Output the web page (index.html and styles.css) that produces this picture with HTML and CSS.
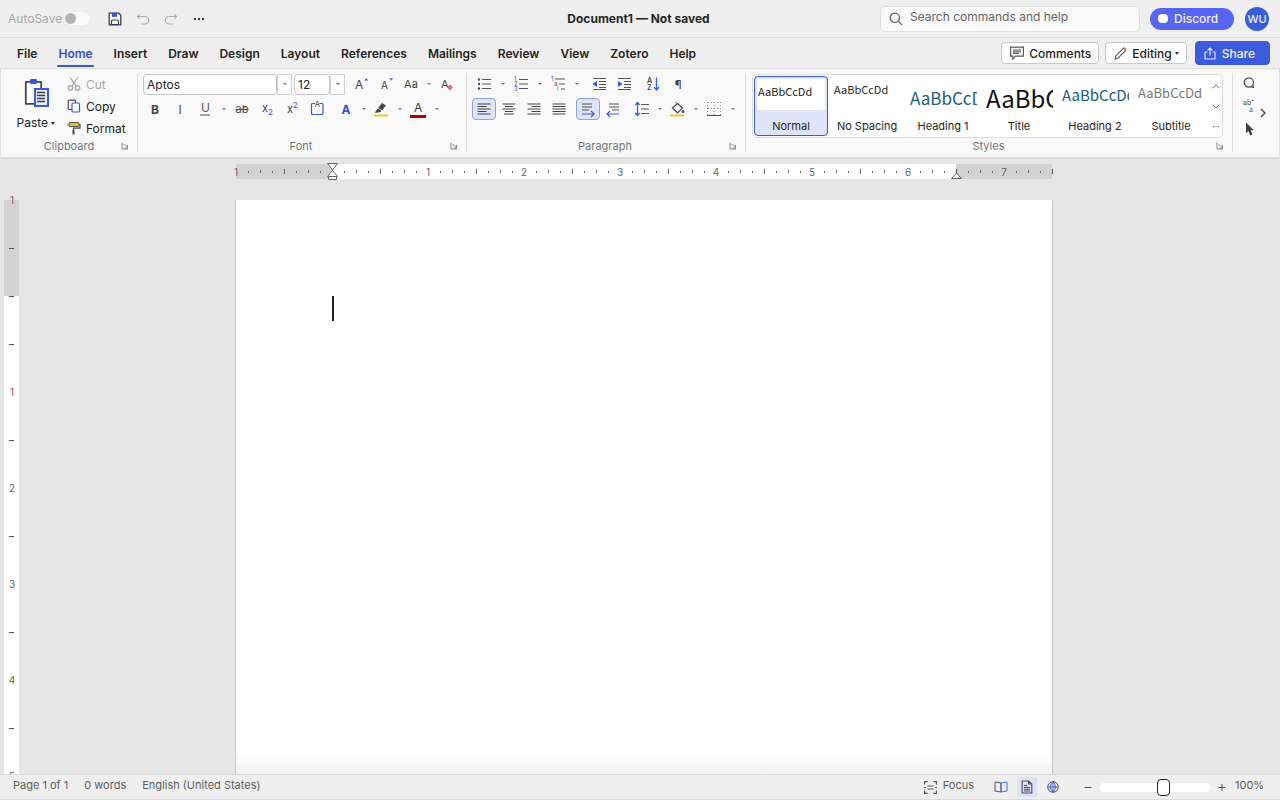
FILE: index.html
```html
<!DOCTYPE html>
<html lang="en">
<head>
<meta charset="utf-8">
<meta name="viewport" content="width=device-width, initial-scale=1">
<title>Document1 — Not saved</title>
<link rel="stylesheet" href="styles.css">
</head>
<body>
<div class="app">
<header class="titlebar">
  <div class="quick">
    <label class="autosave" for="autosave">AutoSave</label>
    <input class="toggle" type="checkbox" id="autosave" disabled>
    <button class="qbtn save" aria-label="Save"><svg width="14" height="14" viewBox="0 0 14 14"><path d="M1.2 1.2h9.6l2 2v9.600H1.200z" fill="#fff" stroke="#3c3c44" stroke-width="1.300"/><path d="M4 0.800h5v4H4z" fill="#3450d0"/><path d="M3.500 12.500v-3.200q0-1.300 1.300-1.300h4.400q1.300 0 1.300 1.300v3.200z" fill="#fff" stroke="#3c3c44" stroke-width="1.200"/></svg></button>
    <button class="qbtn" aria-label="Undo" disabled><svg width="14" height="12" viewBox="0 0 14 12" fill="none" stroke="#adadad" stroke-width="1.200"><path d="M1.500 3.500h7.500a3.500 3.500 0 0 1 0 7.500H5"/><path d="M3.800 1.200L1.500 3.500l2.300 2.300" /></svg></button>
    <button class="qbtn" aria-label="Redo" disabled><svg width="14" height="12" viewBox="0 0 14 12" fill="none" stroke="#adadad" stroke-width="1.200"><path d="M12.500 3.500H5A3.500 3.500 0 0 0 5 11h4"/><path d="M10.200 1.200l2.300 2.300-2.300 2.300"/></svg></button>
    <button class="qbtn" aria-label="More"><svg width="12" height="4" viewBox="0 0 12 4" fill="#3a3a3a"><circle cx="2" cy="2" r="1.200"/><circle cx="6" cy="2" r="1.200"/><circle cx="10" cy="2" r="1.200"/></svg></button>
  </div>
  <h1 class="doc-title">Document1 — Not saved</h1>
  <div class="title-right">
    <label class="search"><svg width="14" height="14" viewBox="0 0 14 14" fill="none" stroke="#5c5c5c" stroke-width="1.200"><circle cx="5.800" cy="5.800" r="4.700"/><path d="M9.200 9.200l4 4"/></svg><input type="text" placeholder="Search commands and help" aria-label="Search commands and help"></label>
    <button class="discord"><span class="discord-mark"></span>Discord</button>
    <button class="avatar">WU</button>
  </div>
</header>

<nav class="tabbar">
  <div class="tabs">
    <button class="tab">File</button><button class="tab active">Home</button><button class="tab">Insert</button><button class="tab">Draw</button><button class="tab">Design</button><button class="tab">Layout</button><button class="tab">References</button><button class="tab">Mailings</button><button class="tab">Review</button><button class="tab">View</button><button class="tab">Zotero</button><button class="tab">Help</button>
  </div>
  <div class="tab-actions">
    <button class="action"><svg width="14" height="14" viewBox="0 0 14 14" fill="none" stroke="#555" stroke-width="1.100"><path d="M0.600 1.100h12.800v9H5.500L2.800 12.800v-2.700H0.600z"/><path d="M3 4h8M3 5.700h8M3 7.400h6"/></svg>Comments</button>
    <button class="action editing"><svg width="13" height="13" viewBox="0 0 13 13" fill="none" stroke="#555" stroke-width="1.100"><path d="M1 12l0.900-3.300L9.700 1l2.200 2.200-7.700 7.800z"/><path d="M10.200 0.800l2 2" stroke="#d88a4a" stroke-width="1.600"/></svg>Editing<span class="down"></span></button>
    <button class="action share"><svg width="12" height="13" viewBox="0 0 12 13" fill="none" stroke="#e6ebff" stroke-width="1.100"><path d="M3.500 5H1v7h10V5H8.500M6 8.500V1M3.600 3.400L6 1l2.400 2.400"/></svg>Share</button>
  </div>
</nav>

<section class="ribbon">
  <div class="group clipboard">
    <div class="group-body">
      <button class="paste"><svg width="26" height="32" viewBox="0 0 26 32"><path d="M2.800 4.800h15.400v22H2.800z" fill="#fff" stroke="#45454d" stroke-width="1.800" stroke-linejoin="round"/><rect x="7" y="2" width="7" height="5" rx="1" fill="#3a55d8"/><rect x="12" y="12" width="13" height="17" fill="#e8edff" stroke="#3a5bdc" stroke-width="2"/><path d="M14 15.500h8M14 18.500h8M14 21.500h8M14 24.500h8" stroke="#3c3c44" stroke-width="1.700"/></svg><span class="paste-label">Paste <span class="down"></span></span></button>
      <div class="clip-list">
        <button class="clip" disabled><svg width="14" height="14" viewBox="0 0 14 14" fill="none" stroke="#a6a6a6" stroke-width="1.200"><circle cx="3.500" cy="11" r="2.300"/><circle cx="10.500" cy="11" r="2.300"/><path d="M3 0.500l6.300 8.600M11 0.500L4.700 9.100"/></svg>Cut</button>
        <button class="clip"><svg width="14" height="14" viewBox="0 0 14 14" fill="none" stroke-width="1.200"><path d="M5 10.500H2.200Q1.200 10.500 1.200 9.500V2.200Q1.200 1.200 2.200 1.200H7.500Q8.500 1.200 8.500 2.200V4" stroke="#4a4a50"/><rect x="5" y="4" width="7.500" height="9" rx="1" stroke="#3a5bdc"/></svg>Copy</button>
        <button class="clip"><svg width="14" height="14" viewBox="0 0 14 14"><rect x="2" y="1.600" width="10" height="4" rx="1" fill="#ecc02c" stroke="#4a4a44"/><path d="M1 3.600H0.500M12 3.500h1v3.700H6.500v2" fill="none" stroke="#4a4a44" stroke-width="1.200"/><path d="M6.500 9v4.500" stroke="#4a4a44" stroke-width="2"/></svg>Format</button>
      </div>
    </div>
    <div class="group-foot"><span>Clipboard</span><button class="launch" aria-label="Clipboard options"><svg width="8" height="8" viewBox="0 0 8 8" fill="none" stroke="#858585"><path d="M1 0.500V7h6M2.500 2l4 4M6.500 3v3.200H3.500"/></svg></button></div>
  </div>

  <div class="group font">
    <div class="group-body rows">
      <div class="row">
        <input class="field name" type="text" value="Aptos" aria-label="Font"><button class="field-arrow" aria-label="Font list"><i class="caret-mark"></i></button>
        <input class="field size" type="text" value="12" aria-label="Font size"><button class="field-arrow" aria-label="Size list"><i class="caret-mark"></i></button>
        <button class="tool gap" aria-label="Grow font"><svg width="16" height="16" viewBox="0 0 16 16"><text x="2" y="13" font-size="12" fill="#444">A</text><path d="M11.500 4.500h3.600L13.300 2z" fill="#4355d8"/></svg></button>
        <button class="tool" aria-label="Shrink font"><svg width="16" height="16" viewBox="0 0 16 16"><text x="3" y="13" font-size="10" fill="#444">A</text><path d="M11.500 2.200h3.600l-1.800 2.500z" fill="#4355d8"/></svg></button>
        <button class="tool case" aria-label="Change case">Aa</button><button class="caret slim" aria-label="Case options"><i class="caret-mark"></i></button>
        <button class="tool" aria-label="Clear formatting"><svg width="16" height="16" viewBox="0 0 16 16"><text x="3" y="12" font-size="11" fill="#444">A</text><path d="M12 8.500l3 3-3 3-3-3z" fill="#e0688e"/></svg></button>
      </div>
      <div class="row second">
        <button class="tool bold">B</button><button class="tool">I</button><button class="tool" aria-label="Underline"><svg width="16" height="16" viewBox="0 0 16 16"><text x="4" y="11" font-size="12" fill="#555">U</text><path d="M3 14h10" stroke="#666" stroke-width="1.200"/></svg></button><button class="caret" aria-label="Underline options"><i class="caret-mark"></i></button><button class="tool strike">ab</button>
        <button class="tool" aria-label="Subscript"><svg width="16" height="16" viewBox="0 0 16 16"><text x="3" y="11" font-size="11" fill="#444">x</text><text x="9" y="14" font-size="8" fill="#4355d8">2</text></svg></button>
        <button class="tool" aria-label="Superscript"><svg width="16" height="16" viewBox="0 0 16 16"><text x="3" y="12" font-size="11" fill="#444">x</text><text x="9" y="7" font-size="8" fill="#4355d8">2</text></svg></button>
        <button class="tool" aria-label="Character border"><svg width="16" height="16" viewBox="0 0 16 16"><rect x="2.500" y="2.500" width="11.500" height="11" rx="1" fill="none" stroke="#3d55c8" stroke-width="1.200"/><path d="M6 2.500h4.500" stroke="#f9f9f9" stroke-width="2"/><text x="5.500" y="6" font-size="8" fill="#444">A</text></svg></button>
        <button class="tool effects gap">A</button><button class="caret slim" aria-label="Effect options"><i class="caret-mark"></i></button>
        <button class="tool" aria-label="Highlight"><svg width="16" height="16" viewBox="0 0 16 16"><path d="M3.500 9L9 2l4 2.500-5.500 6.500-5.500 1z" fill="#454545"/><path d="M5 7l4 3" stroke="#f9f9f9" stroke-width="0.800"/><path d="M1 13.500h14v2H1z" fill="#e9c930"/></svg></button><button class="caret" aria-label="Highlight colors"><i class="caret-mark"></i></button>
        <button class="tool" aria-label="Font color"><svg width="16" height="18" viewBox="0 0 16 18"><text x="4" y="12" font-size="12" fill="#444">A</text><path d="M0 15h16v3H0z" fill="#b90000"/></svg></button><button class="caret" aria-label="Font colors"><i class="caret-mark"></i></button>
      </div>
    </div>
    <div class="group-foot"><span>Font</span><button class="launch" aria-label="Font options"><svg width="8" height="8" viewBox="0 0 8 8" fill="none" stroke="#858585"><path d="M1 0.500V7h6M2.500 2l4 4M6.500 3v3.200H3.500"/></svg></button></div>
  </div>

  <div class="group paragraph">
    <div class="group-body rows">
      <div class="row">
        <button class="tool" aria-label="Bullets"><svg width="16" height="16" viewBox="0 0 16 16" stroke="#555" stroke-width="1.200"><path d="M6 3.500h9M6 8h9M6 12.500h9"/><g fill="#3d46c8" stroke="none"><circle cx="3" cy="3.500" r="1.200"/><circle cx="3" cy="8" r="1.200" fill="#444"/><circle cx="3" cy="12.500" r="1.200" fill="#444"/></g></svg></button><button class="caret" aria-label="Bullet options"><i class="caret-mark"></i></button>
        <button class="tool" aria-label="Numbering"><svg width="16" height="16" viewBox="0 0 16 16"><path d="M6 3.500h9M6 8h9M6 12.500h9" stroke="#555" stroke-width="1.200"/><g font-size="6" fill="#4050c0"><text x="1" y="5">1</text><text x="1" y="10">2</text><text x="1" y="15">3</text></g></svg></button><button class="caret" aria-label="Number options"><i class="caret-mark"></i></button>
        <button class="tool" aria-label="Multilevel list"><svg width="16" height="16" viewBox="0 0 16 16"><path d="M5 3h10M9 8h6M11 13h4" stroke="#555" stroke-width="1.200"/><g font-size="6"><text x="1" y="5" fill="#4050c0">1</text><text x="4" y="10" fill="#555">a</text><text x="7" y="15" fill="#555">i</text></g></svg></button><button class="caret" aria-label="Multilevel options"><i class="caret-mark"></i></button>
        <button class="tool gap" aria-label="Decrease indent"><svg width="16" height="16" viewBox="0 0 16 16"><path d="M2 2.500h13M8 5.500h7M8 8.500h7M8 11.500h7M2 13.500h13" stroke="#555" stroke-width="1.200"/><path d="M6 5v6L1.500 8z" fill="#3a55d8"/></svg></button>
        <button class="tool" aria-label="Increase indent"><svg width="16" height="16" viewBox="0 0 16 16"><path d="M2 2.500h13M8 5.500h7M8 8.500h7M8 11.500h7M2 13.500h13" stroke="#555" stroke-width="1.200"/><path d="M2 5v6L6.500 8z" fill="#3a55d8"/></svg></button>
        <button class="tool gap" aria-label="Sort"><svg width="16" height="16" viewBox="0 0 16 16"><g font-size="7" font-weight="600" fill="#444"><text x="2" y="7">A</text><text x="2" y="14">Z</text></g><path d="M11.500 1.500v12M9 11l2.500 3 2.500-3" fill="none" stroke="#3a5bdc" stroke-width="1.200"/></svg></button>
        <button class="tool pilcrow">¶</button>
      </div>
      <div class="row second">
        <button class="tool on" aria-label="Align left"><svg width="16" height="16" viewBox="0 0 16 16" stroke="#444" stroke-width="1.200"><path d="M1.500 3h13M1.500 5.500h9M1.500 8h13M1.500 10.500h9M1.500 13h13"/></svg></button>
        <button class="tool" aria-label="Center"><svg width="16" height="16" viewBox="0 0 16 16" stroke="#444" stroke-width="1.200"><path d="M1.500 3h13M4 5.500h8M1.500 8h13M4 10.500h8M3 13h10"/></svg></button>
        <button class="tool" aria-label="Align right"><svg width="16" height="16" viewBox="0 0 16 16" stroke="#444" stroke-width="1.200"><path d="M1.500 3h13M5.500 5.500h9M1.500 8h13M5.500 10.500h9M1.500 13h13"/></svg></button>
        <button class="tool" aria-label="Justify"><svg width="16" height="16" viewBox="0 0 16 16" stroke="#444" stroke-width="1.200"><path d="M1.500 3h13M1.500 5.500h13M1.500 8h13M1.500 10.500h13M1.500 13h13"/></svg></button>
        <button class="tool on gap" aria-label="Left to right"><svg width="16" height="16" viewBox="0 0 16 16" fill="none" stroke="#555" stroke-width="1.200"><path d="M2 3h10M2 6h10M2 9h7"/><path d="M2 13h12M11 10l3 3-3 3" stroke="#3a5bdc"/></svg></button>
        <button class="tool" aria-label="Right to left"><svg width="16" height="16" viewBox="0 0 16 16" fill="none" stroke="#555" stroke-width="1.200"><path d="M4 3h10M4 6h10M7 9h7"/><path d="M14 13H2M5 10l-3 3 3 3" stroke="#3a5bdc"/></svg></button>
        <button class="tool gap" aria-label="Line spacing"><svg width="16" height="16" viewBox="0 0 16 16" fill="none" stroke="#555" stroke-width="1.200"><path d="M7 3.500h8M7 8h8M7 12.500h8"/><path d="M3.500 1.500v13M1.300 4l2.200-2.500L5.700 4M1.300 12l2.200 2.500L5.700 12" stroke="#3a5bdc"/></svg></button><button class="caret slim" aria-label="Spacing options"><i class="caret-mark"></i></button>
        <button class="tool" aria-label="Shading"><svg width="16" height="16" viewBox="0 0 16 16"><path d="M3.500 7l5-4.500 5 4.500-5 5z" fill="none" stroke="#484848" stroke-width="1.200"/><path d="M6.500 1l2.500 2.500" stroke="#484848"/><circle cx="14" cy="10.500" r="1.500" fill="#4a46c8"/><path d="M1 13.500h14v2H1z" fill="#e9c930"/></svg></button><button class="caret" aria-label="Shading colors"><i class="caret-mark"></i></button>
        <button class="tool" aria-label="Borders"><svg width="16" height="16" viewBox="0 0 16 16" fill="none" stroke="#888" stroke-dasharray="1 2"><path d="M2 1.500h13M2 7.500h13M1.500 1v13M8 1v13M14.500 1v13"/><path d="M1 14.500h14" stroke="#3d46b8" stroke-dasharray="none"/></svg></button><button class="caret" aria-label="Border options"><i class="caret-mark"></i></button>
      </div>
    </div>
    <div class="group-foot"><span>Paragraph</span><button class="launch" aria-label="Paragraph options"><svg width="8" height="8" viewBox="0 0 8 8" fill="none" stroke="#858585"><path d="M1 0.500V7h6M2.500 2l4 4M6.500 3v3.200H3.500"/></svg></button></div>
  </div>

  <div class="group styles">
    <div class="gallery">
      <button class="style selected"><span class="preview">AaBbCcDd</span><span class="style-name">Normal</span></button>
      <button class="style"><span class="preview tight">AaBbCcDd</span><span class="style-name">No Spacing</span></button>
      <button class="style"><span class="preview h1">AaBbCcDd</span><span class="style-name">Heading 1</span></button>
      <button class="style"><span class="preview title">AaBbCcDd</span><span class="style-name">Title</span></button>
      <button class="style"><span class="preview h2">AaBbCcDd</span><span class="style-name">Heading 2</span></button>
      <button class="style"><span class="preview subtitle">AaBbCcDd</span><span class="style-name">Subtitle</span></button>
      <div class="gallery-nav">
        <button aria-label="Scroll up"><svg width="8" height="5" viewBox="0 0 8 5" fill="none" stroke="#777"><path d="M0.700 4.300L4 1l3.300 3.300"/></svg></button>
        <button aria-label="Scroll down"><svg width="8" height="5" viewBox="0 0 8 5" fill="none" stroke="#777"><path d="M0.700 0.700L4 4l3.300-3.300"/></svg></button>
        <button aria-label="All styles"><svg width="8" height="3" viewBox="0 0 8 3" fill="#666"><circle cx="1.500" cy="1.500" r="0.700"/><circle cx="4" cy="1.500" r="0.700"/><circle cx="6.500" cy="1.500" r="0.700"/></svg></button>
      </div>
    </div>
    <div class="group-foot"><span>Styles</span><button class="launch" aria-label="Style options"><svg width="8" height="8" viewBox="0 0 8 8" fill="none" stroke="#858585"><path d="M1 0.500V7h6M2.500 2l4 4M6.500 3v3.200H3.500"/></svg></button></div>
  </div>

  <div class="overflow">
    <div class="edit-tools">
      <button aria-label="Find"><svg width="12" height="12" viewBox="0 0 12 12"><circle cx="5.800" cy="5.500" r="4.600" fill="none" stroke="#4a4a50" stroke-width="1.200"/><path d="M8 11l3-3v3z" fill="#3a46c8"/></svg></button>
      <button aria-label="Replace"><svg width="12" height="14" viewBox="0 0 12 14"><text x="0" y="6" font-size="7" fill="#555">ab</text><path d="M9 1.500h1.500" stroke="#555"/><text x="6" y="13" font-size="7" fill="#4a5be0">a</text></svg></button>
      <button aria-label="Select"><svg width="12" height="14" viewBox="0 0 12 14"><path d="M3 0.500v10.800l2.400-2.200 1.900 4.400 2.200-0.900-1.900-4.300h3.200z" fill="#3e3e44"/></svg></button>
    </div>
    <button class="next" aria-label="Scroll ribbon"><svg width="6" height="10" viewBox="0 0 6 10" fill="none" stroke="#4a4a4a" stroke-width="1.300"><path d="M1 1l4 4-4 4"/></svg></button>
  </div>
</section>

<main class="workspace">
  <div class="ruler-left" aria-hidden="true">
    <svg class="vscale" width="15" height="574">
      <defs><pattern id="vticks" width="15" height="96" patternUnits="userSpaceOnUse"><path d="M5 48.500h5" stroke="#555"/></pattern></defs>
      <rect width="15" height="574" fill="#fff"/><rect width="15" height="96" fill="#d2d2d2"/>
      <rect width="15" height="574" fill="url(#vticks)"/>
      <path d="M5 96.500h5" stroke="#555"/>
      <g class="marks"><text x="8" y="4">1</text><text x="8" y="196">1</text><text x="8" y="292">2</text><text x="8" y="388">3</text><text x="8" y="484">4</text><text x="8" y="580">5</text></g>
    </svg>
  </div>
  <div class="canvas">
    <svg class="hscale" width="816" height="16" viewBox="0 0 816 16" aria-hidden="true">
      <defs><pattern id="hticks" width="96" height="16" patternUnits="userSpaceOnUse"><path d="M12.500 7v2M24.500 6v3M36.500 7v2M60.500 7v2M72.500 6v3M84.500 7v2M48.500 5v5" stroke="#666"/></pattern></defs>
      <rect width="816" height="15" fill="#fff"/><rect width="96" height="15" fill="#d2d2d2"/><rect x="720" width="96" height="15" fill="#d2d2d2"/>
      <rect width="816" height="16" fill="url(#hticks)"/>
      <path d="M816.500 5v5M720.500 5v5" stroke="#555"/>
      <g class="marks"><text x="0" y="12">1</text><text x="192" y="12">1</text><text x="288" y="12">2</text><text x="384" y="12">3</text><text x="480" y="12">4</text><text x="576" y="12">5</text><text x="672" y="12">6</text><text x="768" y="12">7</text></g>
      <g fill="#fff" stroke="#666"><path d="M91.500 -0.500h10L96.500 6z"/><path d="M91.500 12.500h10L96.500 6.500z"/><path d="M92.500 12.500h8v3h-8z"/><path d="M715.500 14.500h10L720.500 9z"/></g>
    </svg>
    <article class="page"><span class="cursor"></span></article>
  </div>
</main>

<footer class="statusbar">
  <div class="status-left"><span>Page 1 of 1</span><span>0 words</span><span>English (United States)</span></div>
  <div class="status-right">
    <button class="focus"><svg width="13" height="13" viewBox="0 0 13 13" fill="none" stroke="#5a5a5a" stroke-width="1.200"><path d="M0.600 3.500V0.600h3M9.400 0.600h3v2.900M12.400 9.500v2.900h-3M3.600 12.400h-3V9.500M3.500 5h6M3.500 8h6M0 6.500h2M11 6.500h2"/></svg><span>Focus</span></button>
    <button class="view" aria-label="Read mode"><svg width="14" height="12" viewBox="0 0 14 12" fill="none"><path d="M7 2L1 1v9l6 1z" stroke="#555"/><path d="M7 2l6-1v9l-6 1z" stroke="#4a6be0"/></svg></button>
    <button class="view current" aria-label="Print layout"><svg width="12" height="14" viewBox="0 0 12 14" fill="none" stroke="#4a4a55" stroke-width="1.100"><path d="M1.200 1h6.300L10.800 4v9H1.200zM7.500 1v3h3.300M3 5.500h3M3 7.500h6M3 9.300h6M3 11h6"/></svg></button>
    <button class="view" aria-label="Web layout"><svg width="12" height="12" viewBox="0 0 12 12" fill="none"><circle cx="6" cy="6" r="5.300" stroke="#555"/><path d="M6 0.800v10.400M1 6h10M6 0.800Q1 6 6 11.200M6 0.800Q11 6 6 11.200" stroke="#3a5bdc"/></svg></button>
    <button class="step minus" aria-label="Zoom out"><svg width="8" height="8" viewBox="0 0 8 8" stroke="#555"><path d="M0.500 4.500h7"/></svg></button>
    <input class="zoom" type="range" min="0" max="100" value="59" aria-label="Zoom">
    <button class="step" aria-label="Zoom in"><svg width="8" height="8" viewBox="0 0 8 8" stroke="#555"><path d="M0.500 4.500h7M4 1v7"/></svg></button>
    <span class="percent">100%</span>
  </div>
</footer>
</div>
</body>
</html>
```
FILE: styles.css
```css
* { box-sizing: border-box; }
body { margin: 0; font-family: Inter, "Liberation Sans", sans-serif; color: #242424; }
button, input { font: inherit; color: inherit; margin: 0; }
button { border: 0; padding: 0; background: none; }
svg { display: block; flex: none; overflow: visible; }

.app { display: flex; flex-direction: column; height: 100vh; background: #e6e6e6; overflow: hidden; }

/* Title bar */
.titlebar { display: grid; grid-template-columns: 1fr auto 1fr; align-items: center; height: 38px; padding: 0 11px 0 8px; background: #efefef; border-bottom: 1px solid #e0e0e0; flex: none; }
.quick { display: flex; align-items: center; }
.autosave { font-size: 12px; color: #a8a8a8; margin-right: 1px; }
.toggle { appearance: none; width: 28px; height: 15px; border-radius: 8px; background: #fafafa; border: 1px solid #ebebeb; display: flex; align-items: center; padding-left: 1px; margin-right: 10px; }
.toggle::before { content: ""; width: 11px; height: 11px; border-radius: 50%; background: #b4b4b4; }
.qbtn { width: 28px; height: 24px; display: flex; align-items: center; justify-content: center; }
.doc-title { margin: 0; font-size: 12px; font-weight: 700; }
.title-right { display: flex; align-items: center; justify-content: flex-end; }
.search { display: flex; align-items: center; width: 260px; height: 26px; padding: 0 8px; gap: 7px; background: #fafafa; border: 1px solid #e0e0e0; border-radius: 5px; margin-right: 10px; }
.search input { flex: 1; min-width: 0; border: 0; padding: 0 0 4px; background: none; font-size: 12px; outline: 0; }
.search input::placeholder { color: #666; opacity: 1; }
.discord { display: flex; align-items: center; gap: 6px; width: 84px; height: 22px; padding-left: 8px; border-radius: 11px; background: #5865f2; color: #f2f3ff; font-size: 12px; font-weight: 500; margin-right: 11px; }
.discord-mark { width: 10px; height: 9px; border-radius: 4px; background: #fff; }
.avatar { width: 24px; height: 24px; border-radius: 50%; background: #3a5bdc; color: #e8ecff; font-size: 11px; font-weight: 500; }

/* Tabs */
.tabbar { display: flex; align-items: center; justify-content: space-between; height: 30px; padding: 0 10px 0 7px; background: #efefef; flex: none; }
.tabs { display: flex; gap: 1px; height: 100%; }
.tab { padding: 0 10px; font-size: 12px; font-weight: 600; position: relative; }
.tab.active { color: #3a50c8; }
.tab.active::after { content: ""; position: absolute; left: 9px; right: 9px; bottom: 1px; height: 2px; border-radius: 1px; background: #3d5bd0; }
.tab-actions { display: flex; align-items: center; gap: 6px; }
.action { display: flex; align-items: center; gap: 5px; height: 22px; padding: 0 7px 0 8px; border: 1px solid #c8c8c8; border-radius: 4px; background: #fff; font-size: 12px; font-weight: 500; }
.editing { margin-right: 2px; }
.action.share { height: 24px; padding: 0 14px 0 8px; gap: 6px; border-color: #3a5bdc; background: #3a5bdc; color: #eef1ff; }
.down { display: inline-block; border: 2px solid transparent; border-top: 3px solid #333; border-bottom: 0; vertical-align: middle; }
.editing .down { margin-left: -2px; }

/* Ribbon */
.ribbon { display: flex; height: 91px; padding: 4px 0 5px; background: #f9f9f9; border: 1px solid #e0e0e0; border-bottom: 2px solid #dcdcdc; flex: none; }
.group { display: flex; flex-direction: column; justify-content: space-between; border-right: 1px solid #dedede; padding-left: 5px; }
.group-body { display: flex; }
.rows { flex-direction: column; gap: 3px; }
.row { display: flex; height: 22px; }
.group-foot { display: flex; align-items: center; height: 12px; padding: 0 8px 0 9px; font-size: 11px; color: #767676; }
.group-foot span { flex: 1; text-align: center; }
.clipboard { width: 137px; padding-left: 8px; }
.clipboard .group-foot { padding-left: 8px; }
.font { width: 329px; }
.paragraph { width: 279px; }
.styles { flex: 1; min-width: 0; padding-left: 6px; }
.paste { display: flex; flex-direction: column; align-items: center; gap: 6px; width: 54px; padding-top: 4px; font-size: 12px; }
.paste-label { line-height: 15px; }
.clip-list { display: flex; flex-direction: column; margin-left: 4px; }
.clip { display: flex; align-items: center; gap: 5px; height: 22px; font-size: 12px; }
.clip:disabled { color: #a8a8a8; }

.field { height: 21px; align-self: center; border: 1px solid #c4c4c4; border-radius: 4px; background: #fff; padding: 0 3px; font-size: 12px; }
.name { width: 134px; }
.size { width: 36px; margin-left: 2px; }
.field-arrow { width: 15px; height: 21px; align-self: center; border: 1px solid #d0d0d0; background: #fff; display: flex; align-items: center; justify-content: center; }
.caret-mark { border: 2px solid transparent; border-top-color: #777; border-bottom: 0; }
.tool { width: 24px; height: 22px; margin-right: 1px; display: flex; align-items: center; justify-content: center; border: 1px solid transparent; border-radius: 4px; font-size: 12px; color: #444; }
.tool.gap { margin-left: 4px; }
.tool:has(+ .caret) { margin-right: 0; }
.tool.on { background: #dfe4fa; border-color: #8f9fe8; }
.tool.bold { font-weight: 700; }
.tool.case { font-size: 11px; }
.tool.strike { font-size: 11px; text-decoration: line-through; }
.tool.effects { font-size: 12px; font-weight: 700; color: #3450c8; }
.caret { width: 13px; display: flex; align-items: center; justify-content: center; }
.caret.slim { width: 11px; }

.gallery { display: flex; gap: 2px; height: 64px; padding: 1px; border: 1px solid #dcdcdc; border-radius: 5px; background: #fff; margin: 1px 9px 0 0; }
.style { display: flex; flex-direction: column; width: 74px; height: 60px; padding: 2px; border: 1px solid transparent; border-radius: 4px; flex: none; }
.style.selected { background: #dfe4fa; border-color: #3a5bc8; }
.preview { width: 68px; height: 32px; padding-left: 1px; background: #fff; overflow: hidden; white-space: nowrap; text-align: left; font-family: "Noto Sans CJK SC", "Noto Sans", sans-serif; font-size: 11px; line-height: 25px; }
.preview.tight { line-height: 21px; }
.preview.h1 { font-size: 17px; line-height: 38px; color: #215e78; }
.preview.title { font-size: 24px; line-height: 38px; color: #111; }
.preview.h2 { font-size: 15px; line-height: 32px; color: #215e78; }
.preview.subtitle { font-size: 13px; line-height: 28px; color: #777; }
.style-name { font-size: 11px; line-height: 14px; padding-top: 9px; text-align: center; }
.gallery-nav { flex: 1; display: flex; flex-direction: column; }
.gallery-nav button { flex: 1; display: flex; align-items: center; justify-content: center; }

.overflow { display: flex; width: 46px; padding-left: 9px; }
.edit-tools { display: flex; flex-direction: column; width: 13px; align-items: flex-end; }
.edit-tools button { height: 20px; margin-bottom: 3px; display: flex; align-items: center; }
.next { width: 16px; display: flex; align-items: center; justify-content: center; }

/* Workspace */
.workspace { flex: 1; min-height: 0; display: grid; grid-template-columns: 20px 1fr 12px; overflow: hidden; }
.ruler-left { padding: 41px 0 0 4px; }
.marks { font-size: 10px; fill: #666; text-anchor: middle; }
.canvas { display: flex; flex-direction: column; align-items: center; padding-top: 5px; min-height: 0; }
.page { flex: 1; width: 816px; margin-top: 20px; padding: 96px; background: linear-gradient(to top, #f2f2f2, #fff 20px); box-shadow: -1px 0 0 #c8c8c8, 1px 1px 0 0 #c4c4c4; }
.cursor { display: block; width: 2px; height: 25px; background: #222; }

/* Status bar */
.statusbar { display: flex; justify-content: space-between; align-items: center; height: 26px; padding: 0 14px 0 13px; background: #efefef; border-top: 1px solid #dcdcdc; border-bottom: 1px solid #dcdcdc; font-size: 11px; color: #606060; flex: none; }
.status-left { display: flex; gap: 16px; padding-bottom: 4px; }
.status-right { display: flex; align-items: center; }
.focus { display: flex; align-items: center; gap: 6px; margin-right: 14px; }
.focus span, .percent { padding-bottom: 4px; }
.percent { min-width: 31px; margin-left: 1px; }
.view { width: 26px; height: 20px; display: flex; align-items: center; justify-content: center; }
.view.current { width: 20px; margin: 0 3px; background: #dfe1f8; }
.step { width: 24px; height: 20px; display: flex; align-items: center; justify-content: center; }
.step.minus { margin-left: 10px; }
.zoom { appearance: none; width: 110px; height: 18px; background: none; }
.zoom::-webkit-slider-runnable-track { height: 9px; border-radius: 4px; background: #fff; }
.zoom::-webkit-slider-thumb { appearance: none; width: 13px; height: 17px; margin-top: -4px; border: 1px solid #222; border-radius: 4px; background: #fff; }
```
